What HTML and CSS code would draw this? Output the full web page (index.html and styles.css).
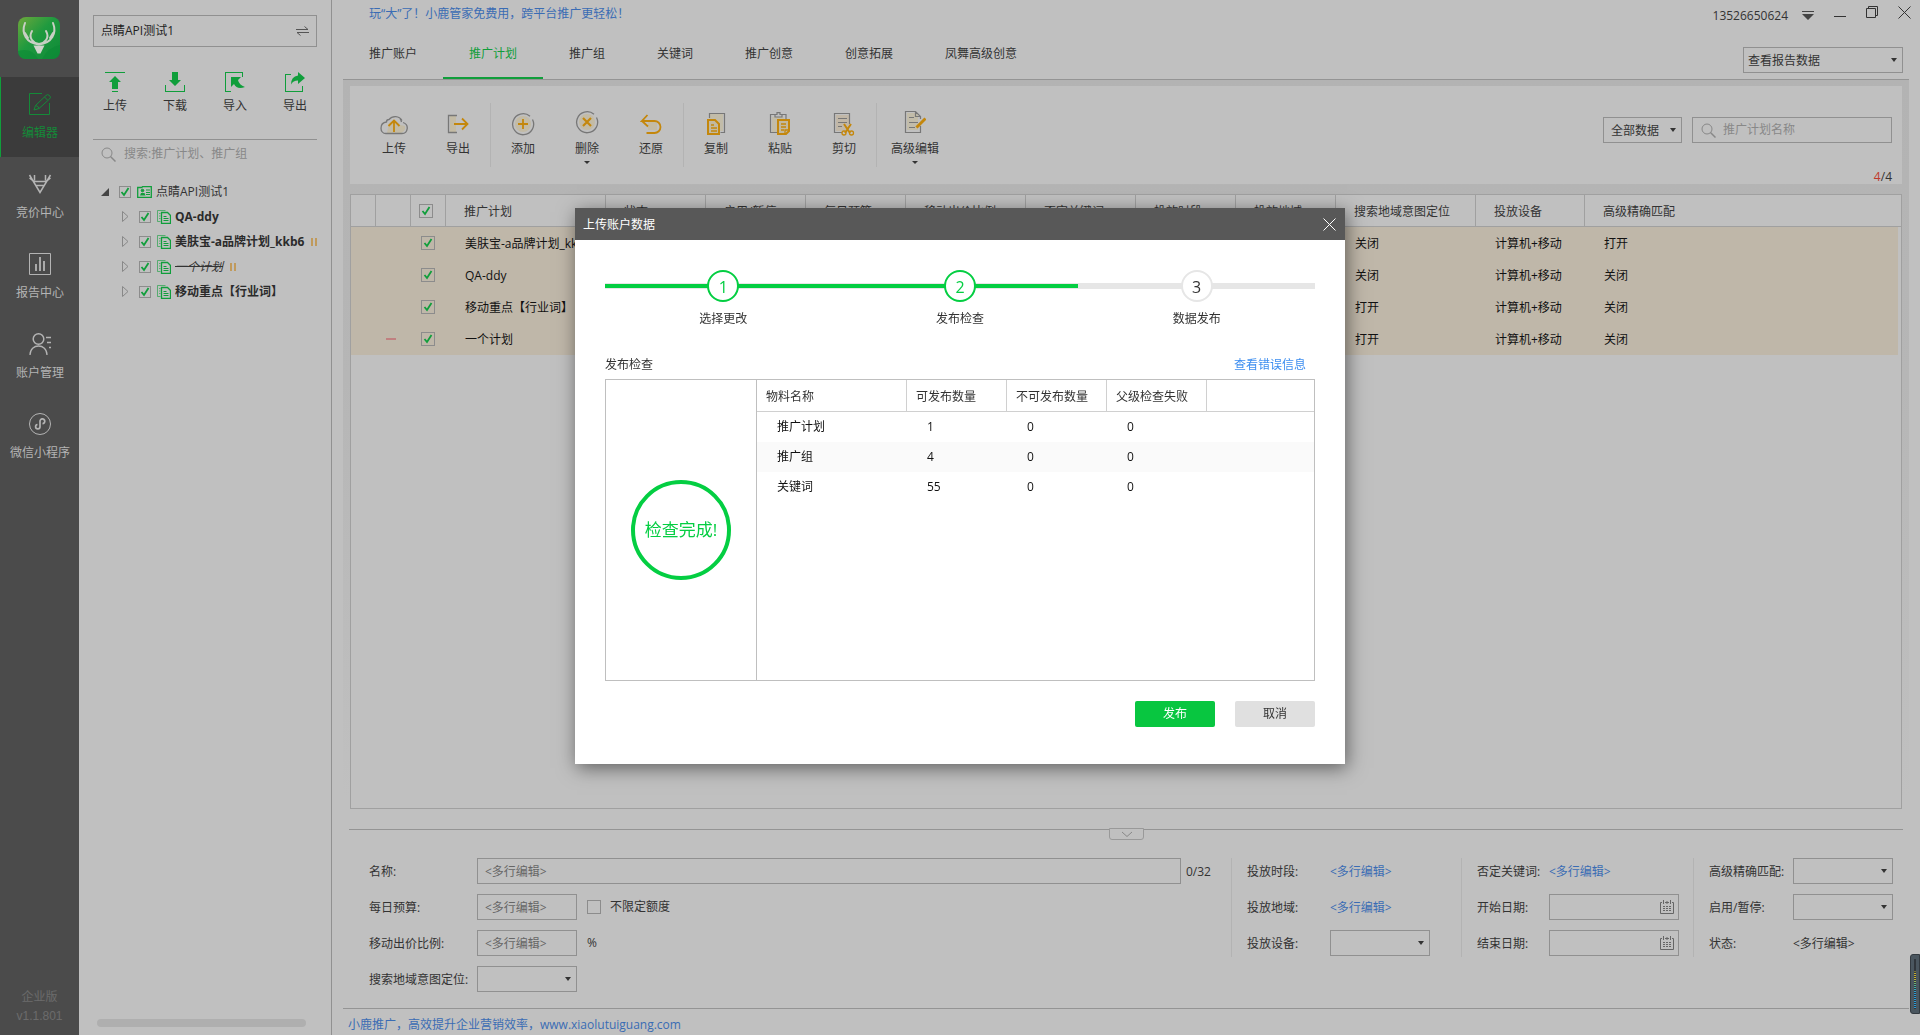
FILE: index.html
```html
<!DOCTYPE html>
<html lang="zh-CN">
<head>
<meta charset="utf-8">
<title>小鹿推广</title>
<link rel="stylesheet" href="styles.css">
</head>
<body>
<div class="app">
  <nav class="rail">
    <svg class="logo" viewBox="0 0 42 42">
      <defs><linearGradient id="lg" x1="0" y1="0" x2="1" y2="1"><stop offset="0" stop-color="#6fa83c"/><stop offset=".45" stop-color="#1f9a3f"/><stop offset="1" stop-color="#0f8a38"/></linearGradient></defs>
      <rect width="42" height="42" rx="8" fill="url(#lg)"/>
      <path d="M0 34Q14 30 20 42H8Q0 42 0 34zM24 42Q30 30 42 28V34Q42 42 34 42z" fill="#0c8a36" opacity=".6"/>
      <path d="M7 6C3 16 8 26 21 27.500C34 26 39 16 35 6M14 14C10 21 15 26 21 27M28 14C32 21 27 26 21 27M7 16l3 5M35 16l-3 5" fill="none" stroke="#c8cfc4" stroke-width="2" stroke-linecap="round"/>
      <path d="M15.500 28.500h11L22.500 36.500h-3z" fill="#d0d4cc"/>
    </svg>
    <a class="rail-item active" href="#"><svg width="24" height="24" viewBox="0 0 24 24" fill="none" stroke="currentColor"><path d="M14 1.500H1.500v21h20V11"/><path d="M6 18l1.500-4.500L18 3.500q1.500-1.800 3.500 0t0 3.500L11 16.500zM16.500 5l3 3M7.500 13.500q3 .5 3.500 3"/></svg><span>编辑器</span></a>
    <a class="rail-item" href="#"><svg width="24" height="24" viewBox="0 0 24 24" fill="none" stroke="currentColor" stroke-width="1.500"><path d="M1.500 3l4.500 7.500 6 10 6-10L22.500 3M6.500 3v5.500M17.500 3v5.500M1.500 6l4.500 3.500h12l4.500-3.500M8 13.500h8"/></svg><span>竞价中心</span></a>
    <a class="rail-item" href="#"><svg width="24" height="24" viewBox="0 0 24 24" fill="none" stroke="currentColor"><path d="M1.500 1.500h21v21h-21z"/><path d="M8 12v7M12 5v14M16 9v10" stroke-width="1.800"/></svg><span>报告中心</span></a>
    <a class="rail-item" href="#"><svg width="24" height="24" viewBox="0 0 24 24" fill="none" stroke="currentColor" stroke-width="1.500"><circle cx="10.500" cy="7" r="5.300"/><path d="M2 23c0-12 17-12 17 0M18 5.500h5M19 10.500h4M21 15.500h2" stroke-width="1.300"/></svg><span>账户管理</span></a>
    <a class="rail-item" href="#"><svg width="24" height="24" viewBox="0 0 24 24" fill="none" stroke="currentColor"><circle cx="12" cy="12" r="10.500"/><path d="M9.500 12.500a2.200 2.200 0 1 0 2.500 2.200V9.500a2.400 2.400 0 1 1 2.500 2.200" stroke-width="1.700"/></svg><span>微信小程序</span></a>
    <p class="version">企业版<br><span>v1.1.801</span></p>
  </nav>

  <aside class="panel">
    <button class="account" type="button"><span>点睛API测试1</span><svg width="13" height="10" viewBox="0 0 13 10" fill="none" stroke="#555"><path d="M0 3.500h12M8.500.5l3.500 3M13 6.500H1M1 6.500l3.500 3"/></svg></button>
    <div class="quick">
      <button type="button"><svg width="20" height="20" viewBox="0 0 20 20" fill="#109e3b"><path d="M0 0h20v1H0zM10 4l6 6h-3v7H7v-7H4zM7 19h6v1H7z"/></svg>上传</button>
      <button type="button"><svg width="20" height="20" viewBox="0 0 20 20" fill="#109e3b"><path d="M7 0h6v8h3l-6 6-6-6h3zM0 13h1v6h18v-6h1v7H0z"/></svg>下载</button>
      <button type="button"><svg width="20" height="20" viewBox="0 0 20 20" fill="#109e3b"><path d="M0 0h18v5h-1V1H1v18h5v1H0zM6 5h10l-3 3q1 5 7 7-8 3-11-3l-3 3z"/></svg>导入</button>
      <button type="button"><svg width="20" height="20" viewBox="0 0 20 20" fill="#109e3b"><path d="M0 2h6v1H1v16h16v-5h1v6H0zM13 0l7 6-7 6V8.500q-5 0-7 4 0-8 7-9z"/></svg>导出</button>
    </div>
    <label class="tree-search"><svg width="15" height="15" viewBox="0 0 15 15" fill="none" stroke="#888"><circle cx="6" cy="6" r="5"/><path d="M9.500 9.500l5 5" stroke-width="1.500"/></svg><input type="text" aria-label="搜索" placeholder="搜索:推广计划、推广组"></label>
    <ul class="tree">
      <li class="root"><svg width="8" height="8" viewBox="0 0 8 8"><path d="M8 0v8H0z" fill="#444"/></svg><input type="checkbox" class="check" checked aria-label="点睛API测试1"><svg width="15" height="12" viewBox="0 0 15 12" fill="none" stroke="#109e3b"><path d="M.7 1.500h4l1-1h8.600v11H.7z" stroke-width="1.300"/><path d="M9 4h4M9 6.500h4M9 8.500h4"/><circle cx="5.500" cy="4.500" r="1.300" fill="#109e3b"/><path d="M3 9.500h5.500l-1-2.500h-3.500z" fill="#109e3b" stroke="none"/></svg><span>点睛API测试1</span></li>
      <li><svg class="arrow" width="7" height="11" viewBox="0 0 7 11"><path d="M.5.5L6 5.500.5 10.500z" fill="none" stroke="#888"/></svg><input type="checkbox" class="check" checked aria-label="QA-ddy"><svg width="14" height="14" viewBox="0 0 14 14" fill="none" stroke="#109e3b"><path d="M8.500.5h-8v11h3" opacity=".6"/><path d="M2 3.500h1.500M2 6h1.500M2 8.500h1.500" opacity=".6"/><path d="M4.500 2.500h6l3 3v8h-9z" stroke-width="1.300"/><path d="M6.500 6.500h3M6.500 8.500h5M6.500 10.500h5"/></svg><b>QA-ddy</b></li>
      <li><svg class="arrow" width="7" height="11" viewBox="0 0 7 11"><path d="M.5.5L6 5.500.5 10.500z" fill="none" stroke="#888"/></svg><input type="checkbox" class="check" checked aria-label="美肤宝-a品牌计划_kkb6"><svg width="14" height="14" viewBox="0 0 14 14" fill="none" stroke="#109e3b"><path d="M8.500.5h-8v11h3" opacity=".6"/><path d="M2 3.500h1.500M2 6h1.500M2 8.500h1.500" opacity=".6"/><path d="M4.500 2.500h6l3 3v8h-9z" stroke-width="1.300"/><path d="M6.500 6.500h3M6.500 8.500h5M6.500 10.500h5"/></svg><b>美肤宝-a品牌计划_kkb6</b><i class="pause"></i></li>
      <li><svg class="arrow" width="7" height="11" viewBox="0 0 7 11"><path d="M.5.5L6 5.500.5 10.500z" fill="none" stroke="#888"/></svg><input type="checkbox" class="check" checked aria-label="一个计划"><svg width="14" height="14" viewBox="0 0 14 14" fill="none" stroke="#109e3b"><path d="M8.500.5h-8v11h3" opacity=".6"/><path d="M2 3.500h1.500M2 6h1.500M2 8.500h1.500" opacity=".6"/><path d="M4.500 2.500h6l3 3v8h-9z" stroke-width="1.300"/><path d="M6.500 6.500h3M6.500 8.500h5M6.500 10.500h5"/></svg><s>一个计划</s><i class="pause"></i></li>
      <li><svg class="arrow" width="7" height="11" viewBox="0 0 7 11"><path d="M.5.5L6 5.500.5 10.500z" fill="none" stroke="#888"/></svg><input type="checkbox" class="check" checked aria-label="移动重点【行业词】"><svg width="14" height="14" viewBox="0 0 14 14" fill="none" stroke="#109e3b"><path d="M8.500.5h-8v11h3" opacity=".6"/><path d="M2 3.500h1.500M2 6h1.500M2 8.500h1.500" opacity=".6"/><path d="M4.500 2.500h6l3 3v8h-9z" stroke-width="1.300"/><path d="M6.500 6.500h3M6.500 8.500h5M6.500 10.500h5"/></svg><b>移动重点【行业词】</b></li>
    </ul>
    <div class="hscroll"></div>
  </aside>

  <main class="main">
    <header class="top">
      <a class="notice" href="#">玩“大”了！小鹿管家免费用，跨平台推广更轻松！</a>
      <nav class="tabs">
        <a href="#">推广账户</a><a class="on" href="#">推广计划</a><a href="#">推广组</a><a href="#">关键词</a><a href="#">推广创意</a><a href="#">创意拓展</a><a href="#">凤舞高级创意</a>
      </nav>
      <div class="window">
        <span>13526650624</span>
        <button type="button" aria-label="菜单"><svg width="12" height="10" viewBox="0 0 12 10"><path d="M0 0h12v1H0zM0 3h12L6 9z" fill="#444"/></svg></button>
        <button type="button" aria-label="最小化"><svg width="12" height="12" viewBox="0 0 12 12"><path d="M0 10h12v1H0z" fill="#333"/></svg></button>
        <button type="button" aria-label="还原"><svg width="12" height="12" viewBox="0 0 12 12" fill="none" stroke="#333"><path d="M.5 2.500h9v9h-9zM2.500 2.500v-2h9v9h-2"/></svg></button>
        <button type="button" aria-label="关闭"><svg width="13" height="13" viewBox="0 0 13 13" stroke="#333"><path d="M.5.500l12 12M12.500.500l-12 12"/></svg></button>
      </div>
      <div class="select report"><select aria-label="查看报告数据"><option>查看报告数据</option></select></div>
    </header>

    <section class="work">
      <div class="toolbar">
        <button class="tool" type="button"><svg width="28" height="22" viewBox="0 0 28 22" fill="none"><path d="M7 19h14q5-2 4-7l-5-1-5-5-6 3z" fill="#c4b892" opacity=".6"/><path d="M22 6.500A8 8 0 0 0 9 5.500Q6.500 5.500 6.500 8C-1 9-.5 19.500 6 19.500h16c6 0 7.500-9 1-11M20 4.500q1 1 1.500 3.500" stroke="#777" stroke-width="1.300"/><path d="M14 18V7M8.500 12L14 6.500 19.500 12" stroke="#c4870c" stroke-width="1.800"/></svg>上传</button>
        <button class="tool" type="button"><svg width="22" height="22" viewBox="0 0 22 22" fill="none"><path d="M3 2h6v16H3z" fill="#c4b892" opacity=".6"/><path d="M10 1.500H1.500v17H10" stroke="#777" stroke-width="1.300"/><path d="M7 10h14M15 4.500L20.500 10 15 15.500" stroke="#c4870c" stroke-width="1.800"/></svg>导出</button>
        <i class="sep"></i>
        <button class="tool" type="button"><svg width="24" height="24" viewBox="0 0 24 24" fill="none"><circle cx="12" cy="12" r="8" fill="#c4b892" opacity=".6"/><path d="M21.500 7.500A10.500 10.500 0 1 1 19 4.300" stroke="#777" stroke-width="1.300"/><path d="M12 7v10M7 12h10" stroke="#c4870c" stroke-width="1.800"/></svg>添加</button>
        <button class="tool drop" type="button"><svg width="24" height="24" viewBox="0 0 24 24" fill="none"><circle cx="12" cy="12" r="8" fill="#c4b892" opacity=".6"/><path d="M21.500 7.500A10.500 10.500 0 1 1 19 4.300" stroke="#777" stroke-width="1.300"/><path d="M8 8l8 8M16 8l-8 8" stroke="#c4870c" stroke-width="2.200"/></svg>删除</button>
        <button class="tool" type="button"><svg width="22" height="22" viewBox="0 0 22 22" fill="none"><path d="M8 8h9v8H8z" fill="#c4b892" opacity=".6"/><path d="M7.500 1L2 7h12.500a5.800 5.800 0 0 1 0 12H6.500M2 7l6 5.500" stroke="#c4870c" stroke-width="1.800"/></svg>还原</button>
        <i class="sep"></i>
        <button class="tool" type="button"><svg width="20" height="24" viewBox="0 0 20 24" fill="none"><path d="M3 2h14v17H3z" fill="#c4b892" opacity=".5"/><path d="M3.500 6V1.500h15v19h-4" stroke="#777" stroke-width="1.200"/><path d="M2 8h7l4 4v10H2z" fill="#c2b9a0" stroke="#c4870c" stroke-width="2"/><path d="M5 13h3M5 16h6M5 19h6" stroke="#c4870c" stroke-width="1.300"/></svg>复制</button>
        <button class="tool" type="button"><svg width="22" height="24" viewBox="0 0 22 24" fill="none"><path d="M3 5h12v15H3z" fill="#c4b892" opacity=".5"/><path d="M8 20.500H1.500v-18H6M13 2.500h4V7M6 5h7V2.500h-2V.7H8v1.800H6z" stroke="#777" stroke-width="1.200"/><path d="M9 8h11v11l-3 3H9z" fill="#c2b9a0" stroke="#c4870c" stroke-width="2"/><path d="M12 12h5M12 15h5M12 18h3M20 18h-4v4" stroke="#c4870c" stroke-width="1.300"/></svg>粘贴</button>
        <button class="tool" type="button"><svg width="22" height="24" viewBox="0 0 22 24" fill="none"><path d="M3 3h13v16H3z" fill="#c4a982" opacity=".4"/><path d="M9 20.500H1.500v-19h15V12M5 6.500h9M5 10.500h9M5 14.500h4" stroke="#777" stroke-width="1.200"/><path d="M11 12l6 9M18 12l-6 9" stroke="#c4870c" stroke-width="2"/><circle cx="11" cy="21" r="2" stroke="#c4870c" stroke-width="1.300"/><circle cx="18.500" cy="21" r="2" stroke="#c4870c" stroke-width="1.300"/></svg>剪切</button>
        <i class="sep"></i>
        <button class="tool drop wide" type="button"><svg width="22" height="24" viewBox="0 0 22 24" fill="none"><path d="M3 3h11v17H3z" fill="#c4b892" opacity=".5"/><path d="M16.500 16v6.500h-15v-21h10l5 5V9M11.500 1.500v5h5M5 7.500h5M5 12.500h9M5 17.500h6" stroke="#777" stroke-width="1.200"/><path d="M12.500 17.500l9-9" stroke="#c4870c" stroke-width="3"/></svg>高级编辑</button>
        <div class="filters">
          <div class="select all"><select aria-label="数据范围"><option>全部数据</option></select></div>
          <label class="search"><svg width="15" height="15" viewBox="0 0 15 15" fill="none" stroke="#888"><circle cx="6" cy="6" r="5"/><path d="M9.500 9.500l5 5" stroke-width="1.500"/></svg><input type="text" aria-label="推广计划名称" placeholder="推广计划名称"></label>
          <span class="count"><em>4</em>/4</span>
        </div>
      </div>

      <div class="grid-wrap">
        <table class="plans">
          <colgroup><col class="w25"><col class="w35"><col class="w35"><col class="w160"><col class="w100"><col class="w100"><col class="w100"><col class="w120"><col class="w110"><col class="w100"><col class="w100"><col class="w140"><col class="w109"><col></colgroup>
          <thead><tr><th></th><th></th><th class="tick"><input type="checkbox" class="check" checked aria-label="全选"></th><th>推广计划</th><th>状态</th><th>启用/暂停</th><th>每日预算</th><th>移动出价比例</th><th>否定关键词</th><th>投放时段</th><th>投放地域</th><th>搜索地域意图定位</th><th>投放设备</th><th>高级精确匹配</th></tr></thead>
          <tbody>
            <tr><td></td><td></td><td class="tick"><input type="checkbox" class="check" checked aria-label="选择"></td><td>美肤宝-a品牌计划_kkb6</td><td></td><td></td><td></td><td></td><td></td><td></td><td></td><td>关闭</td><td>计算机+移动</td><td>打开</td></tr>
            <tr><td></td><td></td><td class="tick"><input type="checkbox" class="check" checked aria-label="选择"></td><td>QA-ddy</td><td></td><td></td><td></td><td></td><td></td><td></td><td></td><td>关闭</td><td>计算机+移动</td><td>关闭</td></tr>
            <tr><td></td><td></td><td class="tick"><input type="checkbox" class="check" checked aria-label="选择"></td><td>移动重点【行业词】</td><td></td><td></td><td></td><td></td><td></td><td></td><td></td><td>打开</td><td>计算机+移动</td><td>关闭</td></tr>
            <tr><td></td><td class="tick"><i class="minus"></i></td><td class="tick"><input type="checkbox" class="check" checked aria-label="选择"></td><td>一个计划</td><td></td><td></td><td></td><td></td><td></td><td></td><td></td><td>打开</td><td>计算机+移动</td><td>关闭</td></tr>
          </tbody>
        </table>
      </div>
    </section>

    <form class="detail">
      <button class="fold" type="button" aria-label="收起"><svg width="12" height="7" viewBox="0 0 12 7" fill="none" stroke="#888"><path d="M1 1l5 4.500L11 1"/></svg></button>
      <div class="group first">
        <label for="f1">名称:</label><div class="row"><input id="f1" class="box name" type="text" placeholder="&lt;多行编辑&gt;"><span class="len">0/32</span></div>
        <label for="f2">每日预算:</label><div class="row"><input id="f2" class="box" type="text" placeholder="&lt;多行编辑&gt;"><label class="inline"><input type="checkbox" class="check big">不限定额度</label></div>
        <label for="f3">移动出价比例:</label><div class="row"><input id="f3" class="box" type="text" placeholder="&lt;多行编辑&gt;"><span class="pct">%</span></div>
        <label for="f4">搜索地域意图定位:</label><div class="row"><div class="select"><select id="f4"><option></option></select></div></div>
      </div>
      <div class="group second">
        <span>投放时段:</span><a href="#">&lt;多行编辑&gt;</a>
        <span>投放地域:</span><a href="#">&lt;多行编辑&gt;</a>
        <label for="f5">投放设备:</label><div class="select"><select id="f5"><option></option></select></div>
      </div>
      <div class="group third">
        <span>否定关键词:</span><a href="#">&lt;多行编辑&gt;</a>
        <label for="f6">开始日期:</label><div class="date"><input id="f6" type="text"><svg width="14" height="14" viewBox="0 0 14 14" fill="none" stroke="#666"><path d="M2 2.500H.5v11h13v-11H12M5 2.500h4M3.500 0v4M10.500 0v4M7 1v3"/><path d="M3 6.500h8M3 8.500h8M3 10.500h8" stroke-dasharray="2 1"/></svg></div>
        <label for="f7">结束日期:</label><div class="date"><input id="f7" type="text"><svg width="14" height="14" viewBox="0 0 14 14" fill="none" stroke="#666"><path d="M2 2.500H.5v11h13v-11H12M5 2.500h4M3.500 0v4M10.500 0v4M7 1v3"/><path d="M3 6.500h8M3 8.500h8M3 10.500h8" stroke-dasharray="2 1"/></svg></div>
      </div>
      <div class="group fourth">
        <label for="f8">高级精确匹配:</label><div class="select"><select id="f8"><option></option></select></div>
        <label for="f9">启用/暂停:</label><div class="select"><select id="f9"><option></option></select></div>
        <span>状态:</span><span>&lt;多行编辑&gt;</span>
      </div>
    </form>
    <footer class="foot"><a href="#">小鹿推广，高效提升企业营销效率，www.xiaolutuiguang.com</a></footer>
  </main>
</div>

<div class="meter"><i></i></div>

<div class="overlay">
  <div class="dialog" role="dialog" aria-labelledby="dt">
    <header class="dialog-head"><h2 id="dt">上传账户数据</h2><button type="button" aria-label="关闭"><svg width="13" height="13" viewBox="0 0 13 13" stroke="#fff"><path d="M.5.500l12 12M12.500.500l-12 12"/></svg></button></header>
    <div class="dialog-body">
      <ol class="steps">
        <li class="done"><b>1</b>选择更改</li>
        <li class="done"><b>2</b>发布检查</li>
        <li><b>3</b>数据发布</li>
      </ol>
      <div class="caption"><span>发布检查</span><a href="#">查看错误信息</a></div>
      <div class="result">
        <div class="status"><div class="ring">检查完成!</div></div>
        <table class="checks">
          <colgroup><col class="w150"><col class="w100"><col class="w100"><col class="w100"><col></colgroup>
          <thead><tr><th>物料名称</th><th>可发布数量</th><th>不可发布数量</th><th>父级检查失败</th><th></th></tr></thead>
          <tbody>
            <tr><td>推广计划</td><td>1</td><td>0</td><td>0</td><td></td></tr>
            <tr><td>推广组</td><td>4</td><td>0</td><td>0</td><td></td></tr>
            <tr><td>关键词</td><td>55</td><td>0</td><td>0</td><td></td></tr>
          </tbody>
        </table>
      </div>
      <div class="actions"><button class="primary" type="button">发布</button><button type="button">取消</button></div>
    </div>
  </div>
</div>
</body>
</html>
```
FILE: styles.css
```css
* { box-sizing: border-box; }
body, button, input, select {
  font: 12px/16px "Open Sans", "Noto Sans CJK SC", sans-serif;
}
body { margin: 0; color: #333; background: #c0c0c0; }
button, input, select { color: inherit; border-radius: 0; }
button { border: 0; background: none; padding: 0; }
a { color: #3a6cb4; text-decoration: none; }
ul, ol, p, h2 { margin: 0; padding: 0; list-style: none; }
svg { display: block; flex: none; }
i, em { font-style: normal; }
input::placeholder { color: #888; opacity: 1; }

.app { display: grid; grid-template-columns: 79px 253px 1fr; min-height: 100vh; }

/* left rail */
.rail { display: flex; flex-direction: column; background: #4b4b4b; }
.logo { width: 42px; height: 42px; margin: 17px 0 18px 18px; }
.rail-item {
  display: flex; flex-direction: column; align-items: center; gap: 9px;
  height: 80px; padding: 15px 0 0 1px; color: #b4b4b4; white-space: nowrap;
}
.rail-item.active { background: #3b3b3b; color: #148a38; box-shadow: inset 1px 0 #109e3b; }
.version { margin-top: auto; padding-bottom: 9px; text-align: center; line-height: 19px; color: #6b6b6b; }
.version span { font-family: "Liberation Sans", sans-serif; }

/* account tree panel */
.panel { display: flex; flex-direction: column; padding: 15px 14px 8px; border-right: 1px solid #919191; overflow: hidden; }
.account {
  display: flex; justify-content: space-between; align-items: center;
  height: 32px; padding: 0 7px; border: 1px solid #909090; color: #222;
}
.quick { display: grid; grid-template-columns: repeat(4, 60px); margin: 25px -8px 0; height: 67px; align-items: start; }
.quick button { display: flex; flex-direction: column; align-items: center; gap: 6px; }
.tree-search { display: flex; align-items: center; gap: 8px; height: 29px; padding-left: 8px; border-top: 1px solid #909090; }
.tree-search input, .search input, .date input { flex: 1; min-width: 0; border: 0; padding: 0; background: none; outline: 0; }
.tree { margin-top: 11px; }
.tree li { display: flex; align-items: center; height: 25px; padding-left: 29px; white-space: nowrap; }
.tree .root { padding-left: 8px; }
.tree .check { margin: 0 6px 0 10px; }
.tree li > :nth-child(4) { margin-left: 4px; }
.tree b { color: #2b2b2b; }
.tree s { font-style: italic; }
.pause { width: 6px; height: 8px; margin-left: 7px; border: solid #c09a5c; border-width: 0 2px; flex: none; }
.hscroll { height: 8px; margin: auto 11px 0 4px; border-radius: 4px; background: #afafaf; }

.check {
  appearance: none; flex: none; width: 12px; height: 12px; margin: 0; border: 1px solid #8c8c8c;
}
.check:checked {
  background: center / 12px 12px no-repeat url("data:image/svg+xml,%3Csvg xmlns='http://www.w3.org/2000/svg' viewBox='0 0 12 12'%3E%3Cpath d='M2.500 6l2.500 3L9.500 2' fill='none' stroke='%23109e3b' stroke-width='1.800'/%3E%3C/svg%3E");
}

/* drop-down boxes */
.select { position: relative; width: 100px; height: 26px; }
.select select { appearance: none; width: 100%; height: 100%; padding: 1px 20px 0 4px; border: 1px solid #909090; background: none; }
.select::after {
  content: ""; position: absolute; right: 6px; top: 11px;
  border: 3px solid transparent; border-top: 4px solid #333; border-bottom: 0; pointer-events: none;
}

/* main column */
.main { display: flex; flex-direction: column; padding: 0 11px; }
.top {
  display: grid; grid-template-columns: 1fr auto; grid-template-rows: 28px 51px;
  border-bottom: 1px solid #949494;
}
.notice { padding: 6px 0 0 26px; }
.window { grid-area: 1 / 2; display: flex; align-items: center; margin-right: -2px; height: 24px; }
.window span { padding-top: 7px; }
.window button { margin-left: 14px; }
.window button:nth-of-type(1) { padding-top: 7px; }
.window button:nth-of-type(n+2) { margin-left: 20px; }
.tabs { grid-area: 2 / 1; display: flex; }
.tabs a { padding: 18px 26px 0; color: #333; border-bottom: 2px solid transparent; }
.tabs .on { color: #109e3b; border-color: #109e3b; }
.report { grid-area: 2 / 2; justify-self: end; width: 160px; margin: 19px 6px 0 0; }
.work {
  flex: 1; display: flex; flex-direction: column; gap: 10px; padding: 6px 7px 20px;
  background: linear-gradient(#b3b3b3, #b6b6b6 40%, #c0c0c0 96%);
}
.toolbar { display: flex; height: 98px; padding: 17px 10px 0 12px; background: #c0c0c0; }
.tool { display: flex; flex-direction: column; align-items: center; justify-content: flex-end; gap: 5px; width: 64px; height: 54px; }
.tool.drop { gap: 7px; }
.tool.drop::after { content: ""; border: 3px solid transparent; border-top: 3px solid #333; border-bottom: 0; margin: -3px 0 -7px; }
.tool.wide { width: 76px; }
.sep { width: 1px; height: 64px; background: #b3b3b3; }
.filters { display: grid; grid-template-columns: 79px 200px; grid-template-rows: 26px 1fr; gap: 0 10px; margin-left: auto; padding-top: 14px; height: 82px; }
.all { width: 79px; }
.all select { padding-left: 7px; }
.search { display: flex; align-items: center; gap: 7px; padding: 0 8px; border: 1px solid #909090; }
.count { grid-column: 2; justify-self: end; align-self: end; }
.count em { color: #c0392b; }

.grid-wrap { flex: 1; border: 1px solid #a0a0a0; background: #c0c0c0; overflow: hidden; }
table { width: 100%; table-layout: fixed; border-spacing: 0; border-collapse: separate; }
th, td { padding: 0; text-align: left; font-weight: 400; white-space: nowrap; overflow: hidden; }
.w25 { width: 25px; } .w35 { width: 35px; } .w100 { width: 100px; } .w109 { width: 109px; } .w110 { width: 110px; }
.w120 { width: 120px; } .w140 { width: 140px; } .w150 { width: 150px; } .w160 { width: 160px; }
.plans th { height: 32px; padding: 2px 0 0 18px; border: solid #a0a0a0; border-width: 0 1px 1px 0; }
.plans th:last-child { border-right: 0; }
.plans td { height: 32px; padding: 2px 0 0 19px; background: #bfb7a9; color: #111; }
.plans td:last-child { border-right: 3px solid #c0c0c0; }
.plans .tick { padding: 0 0 0 8px; }
.plans td.tick { padding-left: 10px; }
.plans .check { display: block; width: 14px; height: 14px; }
.minus { display: block; width: 10px; height: 2px; background: #c08080; }

/* detail form */
.detail {
  position: relative; display: grid; grid-template-columns: 1fr 230px 232px 210px;
  height: 179px; margin: 0 6px; padding: 28px 0 0 20px; border-top: 1px solid #949494;
}
.fold {
  position: absolute; left: 50%; top: -2px; margin-left: -17px; width: 35px; height: 12px;
  display: flex; align-items: center; justify-content: center;
  border: 1px solid #999; border-radius: 0 0 3px 3px; background: #c0c0c0;
}
.group { display: grid; grid-auto-rows: 26px; align-content: start; align-items: center; gap: 10px 0; }
.group > label, .group > span, .group > a { padding-top: 2px; }
.first { grid-template-columns: 108px 1fr; padding-right: 13px; }
.second, .third, .fourth { height: 99px; padding-left: 15px; border-left: 1px solid #b3b3b3; }
.second { grid-template-columns: 83px 1fr; }
.third { grid-template-columns: 72px 130px; }
.fourth { grid-template-columns: 84px 1fr; }
.row { display: flex; align-items: center; }
.box { width: 100px; height: 26px; padding: 0 7px; border: 1px solid #909090; background: none; }
.box::placeholder { color: #666; }
.name { flex: 1; }
.len { width: 37px; padding: 2px 0 0 5px; }
.inline { display: flex; align-items: center; gap: 9px; margin-left: 10px; }
.big { width: 14px; height: 14px; }
.pct { margin-left: 10px; }
.date { display: flex; align-items: center; width: 130px; height: 26px; padding: 0 4px; border: 1px solid #909090; }
.foot { height: 27px; padding: 8px 0 0 5px; border-top: 1px solid #949494; }

/* level indicator docked to the screen edge */
.meter { position: fixed; right: 0; bottom: 21px; width: 10px; height: 60px; padding: 4px 3px; border: 1px solid #333a40; border-radius: 3px 0 0 3px; background: #4a565f; }
.meter i {
  display: block; height: 50px;
  background: repeating-linear-gradient(transparent 0 1px, #30363c 1px 2px), linear-gradient(#30363c 12px, #c8b030 13px 20px, #4fb890 26px, #2a9bd8 34px);
}

/* upload dialog */
.overlay { position: fixed; inset: 0; display: flex; justify-content: center; align-items: flex-start; padding-top: 208px; pointer-events: none; }
.dialog { width: 770px; background: #fff; box-shadow: 2px 4px 18px rgba(0, 0, 0, .5); pointer-events: auto; }
.dialog-head { display: flex; align-items: center; justify-content: space-between; height: 32px; padding: 0 9px 0 8px; background: #585858; color: #fff; }
.dialog-head h2 { padding-top: 2px; font-size: 12px; font-weight: 400; }
.dialog-body { padding: 30px 30px 37px; }
.steps {
  display: grid; grid-template-columns: repeat(3, 1fr); height: 87px;
  background: linear-gradient(#e6e6e6, #e6e6e6) 0 13px / 100% 6px no-repeat;
}
.steps li { display: flex; flex-direction: column; align-items: center; gap: 9px; }
.steps .done { background: linear-gradient(#04ce42, #04ce42) 0 14px / 100% 4px no-repeat; }
.steps b { width: 32px; height: 32px; border: 2px solid #e6e6e6; border-radius: 50%; background: #fff; font-weight: 400; font-size: 16px; line-height: 30px; text-align: center; }
.steps .done b { border-color: #04ce42; color: #04ce42; }
.caption { display: flex; justify-content: space-between; height: 22px; padding-right: 9px; }
.caption a { color: #3d8ef0; }
.result { display: grid; grid-template-columns: 151px 1fr; align-items: start; height: 302px; border: 1px solid #bfbfbf; }
.status { display: flex; align-items: center; justify-content: center; height: 300px; border-right: 1px solid #bfbfbf; }
.ring { width: 100px; height: 100px; border: 4px solid #04ce42; border-radius: 50%; color: #04ce42; font-size: 17px; line-height: 92px; text-align: center; white-space: nowrap; }
.checks th { height: 32px; padding: 2px 0 0 9px; border: solid #d0d0d0; border-width: 0 1px 1px 0; }
.checks th:last-child { border-right: 0; }
.checks td { height: 30px; padding-left: 20px; color: #111; }
.checks tr:nth-child(2) td { background: #fafafa; }
.actions { display: flex; justify-content: flex-end; gap: 20px; margin-top: 20px; }
.actions button { width: 80px; height: 26px; border-radius: 2px; background: #e0e0e0; }
.actions .primary { background: #08c640; color: #fff; }
```
